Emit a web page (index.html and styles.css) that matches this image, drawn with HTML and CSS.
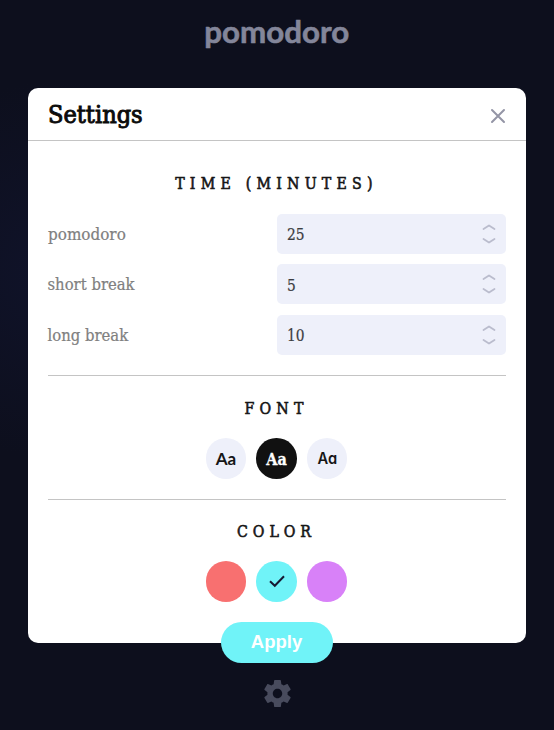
FILE: index.html
```html
<!DOCTYPE html>
<html lang="en">
<head>
<meta charset="utf-8">
<title>Pomodoro</title>
<link rel="stylesheet" href="styles.css">
</head>
<body>
<h1 class="logo"><span>pomodoro</span></h1>
<main class="panel">
  <header class="panel-head">
    <h2 class="title"><span>Settings</span></h2>
    <svg class="close" viewBox="0 0 16 16"><path d="M2 2l12 12M14 2L2 14"/></svg>
  </header>
  <div class="content">
    <section class="section time">
      <h3>TIME (MINUTES)</h3>
      <div class="row"><label><span class="wide">pomodoro</span></label>
        <div class="field"><span>25</span><svg viewBox="0 0 14 22"><path d="M1.500 6L7 2.500l5.500 3.500M1.500 16L7 19.500l5.500-3.500"/></svg></div></div>
      <div class="row"><label><span>short break</span></label>
        <div class="field"><span>5</span><svg viewBox="0 0 14 22"><path d="M1.500 6L7 2.500l5.500 3.500M1.500 16L7 19.500l5.500-3.500"/></svg></div></div>
      <div class="row"><label><span>long break</span></label>
        <div class="field"><span>10</span><svg viewBox="0 0 14 22"><path d="M1.500 6L7 2.500l5.500 3.500M1.500 16L7 19.500l5.500-3.500"/></svg></div></div>
    </section>
    <section class="section font">
      <h3>FONT</h3>
      <div class="choices">
        <div class="dot sans"><span>Aa</span></div>
        <div class="dot slab"><span>Aa</span></div>
        <div class="dot mono"><span>Aa</span></div>
      </div>
    </section>
    <section class="section color">
      <h3 class="tight">COLOR</h3>
      <div class="choices">
        <div class="dot red"></div>
        <div class="dot cyan"><svg viewBox="0 0 18 14"><path d="M2 7.200l4.800 4.600L16 2.200"/></svg></div>
        <div class="dot purple"></div>
      </div>
    </section>
  </div>
  <button class="apply">Apply</button>
</main>
<svg class="gear" viewBox="2 2 20 20"><path d="M19.430 12.980c.040-.320.070-.640.070-.980s-.030-.660-.070-.980l2.110-1.650c.190-.150.240-.420.120-.640l-2-3.460c-.120-.220-.390-.300-.610-.220l-2.490 1c-.520-.400-1.080-.730-1.690-.980l-.380-2.650A.488.488 0 0 0 14 2h-4c-.250 0-.460.180-.490.420l-.380 2.650c-.610.250-1.170.590-1.690.980l-2.490-1c-.230-.090-.490 0-.610.220l-2 3.460c-.130.220-.070.490.120.640l2.110 1.650c-.040.320-.070.650-.070.980s.030.660.070.980l-2.110 1.650c-.190.150-.240.420-.120.640l2 3.460c.120.220.390.300.610.220l2.490-1c.520.400 1.080.730 1.690.980l.380 2.650c.030.240.240.420.490.420h4c.250 0 .460-.180.490-.420l.380-2.650c.610-.250 1.170-.590 1.690-.980l2.490 1c.230.090.490 0 .610-.220l2-3.460c.120-.220.070-.490-.120-.640l-2.110-1.650zM12 15.500c-1.930 0-3.500-1.570-3.500-3.500s1.570-3.500 3.500-3.500 3.500 1.570 3.500 3.500-1.570 3.500-3.500 3.500z"/></svg>
</body>
</html>
```
FILE: styles.css
```css
* { box-sizing: border-box; }
body {
  margin: 0;
  height: 730px;
  overflow: hidden;
  display: flex;
  flex-direction: column;
  align-items: center;
  background: radial-gradient(circle at 60px 270px, #10132a 0, #0d0f1d 190px);
  font-family: "Roboto Slab", "DejaVu Serif Condensed", "DejaVu Serif", serif;
  font-stretch: condensed;
}
h1, h2, h3 { margin: 0; font-weight: 400; }
h1 span, h2 span, label span, .field span, .dot span { display: inline-block; }
.logo {
  height: 87.500px;
  padding-top: 12px;
  font: 700 31px/38px Lato, sans-serif;
  color: #83869a;
  -webkit-text-stroke: .6px;
}
.logo span { transform: scaleX(1.010); }
.panel {
  width: 498px;
  height: 555.500px;
  flex: none;
  margin-left: -1px;
  background: #fff;
  border-radius: 10px;
  display: flex;
  flex-direction: column;
  align-items: center;
}
.panel-head {
  width: 100%;
  height: 53px;
  flex: none;
  padding: 0 20px;
  display: flex;
  align-items: center;
  justify-content: space-between;
  border-bottom: 1px solid #c4c4c4;
}
.title { padding-top: 3px; font-size: 24px; line-height: 32px; color: #0b0b0b; -webkit-text-stroke: .9px; }
.title span, label span, .field span { transform-origin: left; }
.title span { transform: scaleX(1.045); }
.close { width: 16px; height: 16px; margin-top: 4px; stroke: #9495a6; stroke-width: 2; stroke-linecap: round; }
.content { width: 458px; height: 481px; flex: none; }
.section { border-bottom: 1px solid #c4c4c4; }
.time { height: 235px; padding-top: 31px; }
.font { height: 124px; padding-top: 21px; }
.color { border: 0; padding-top: 20px; }
h3 {
  height: 24px;
  line-height: 24px;
  font-size: 15.800px;
  letter-spacing: 5.200px;
  text-align: center;
  color: #161616;
  -webkit-text-stroke: .55px;
}
.tight { letter-spacing: 4.900px; }
.time h3 { margin-bottom: 18px; }
.row { display: flex; align-items: center; height: 40px; margin-bottom: 10.500px; }
label { width: 229px; padding-top: 2px; font-size: 16.500px; line-height: 24px; color: #808080; -webkit-text-stroke: .2px; }
label .wide { transform: scaleX(1.025); }
.field {
  width: 229px;
  height: 40px;
  padding: 0 10px;
  display: flex;
  align-items: center;
  justify-content: space-between;
  border-radius: 5px;
  background: #eef0fa;
  font-size: 16.500px;
  color: #3c3d42;
  -webkit-text-stroke: .2px;
}
.field span { padding-top: 2px; transform: scaleX(.93); }
.field svg { width: 14px; height: 22px; fill: none; stroke: #babccd; stroke-width: 1.800; stroke-linecap: round; stroke-linejoin: round; }
.choices { display: flex; justify-content: center; gap: 10px; margin-top: 17.500px; }
.dot {
  width: 40.600px;
  height: 40.600px;
  border-radius: 50%;
  display: flex;
  align-items: center;
  justify-content: center;
  background: #eef0fa;
  color: #161616;
}
.dot span { padding-top: 2px; }
.sans { font: 700 17px/24px Lato, sans-serif; }
.slab { background: #111; color: #fff; font-size: 16px; font-weight: 700; -webkit-text-stroke: .3px; }
.mono { font: 600 15.500px/24px Inter, sans-serif; font-feature-settings: "cv11"; }
.mono span { transform: scaleX(.95); }
.red { background: #f87070; }
.cyan { background: #70f3f8; }
.purple { background: #d881f8; }
.cyan svg { width: 18px; height: 14px; fill: none; stroke: #161932; stroke-width: 2; }
.apply {
  width: 112px;
  height: 41px;
  flex: none;
  border: 0;
  border-radius: 21px;
  background: #70f3f8;
  color: #fff;
  font: 700 18.500px/24px "Liberation Sans", sans-serif;
}
.gear { width: 27px; height: 27px; flex: none; margin-top: 37px; fill: #484b5d; }
```
